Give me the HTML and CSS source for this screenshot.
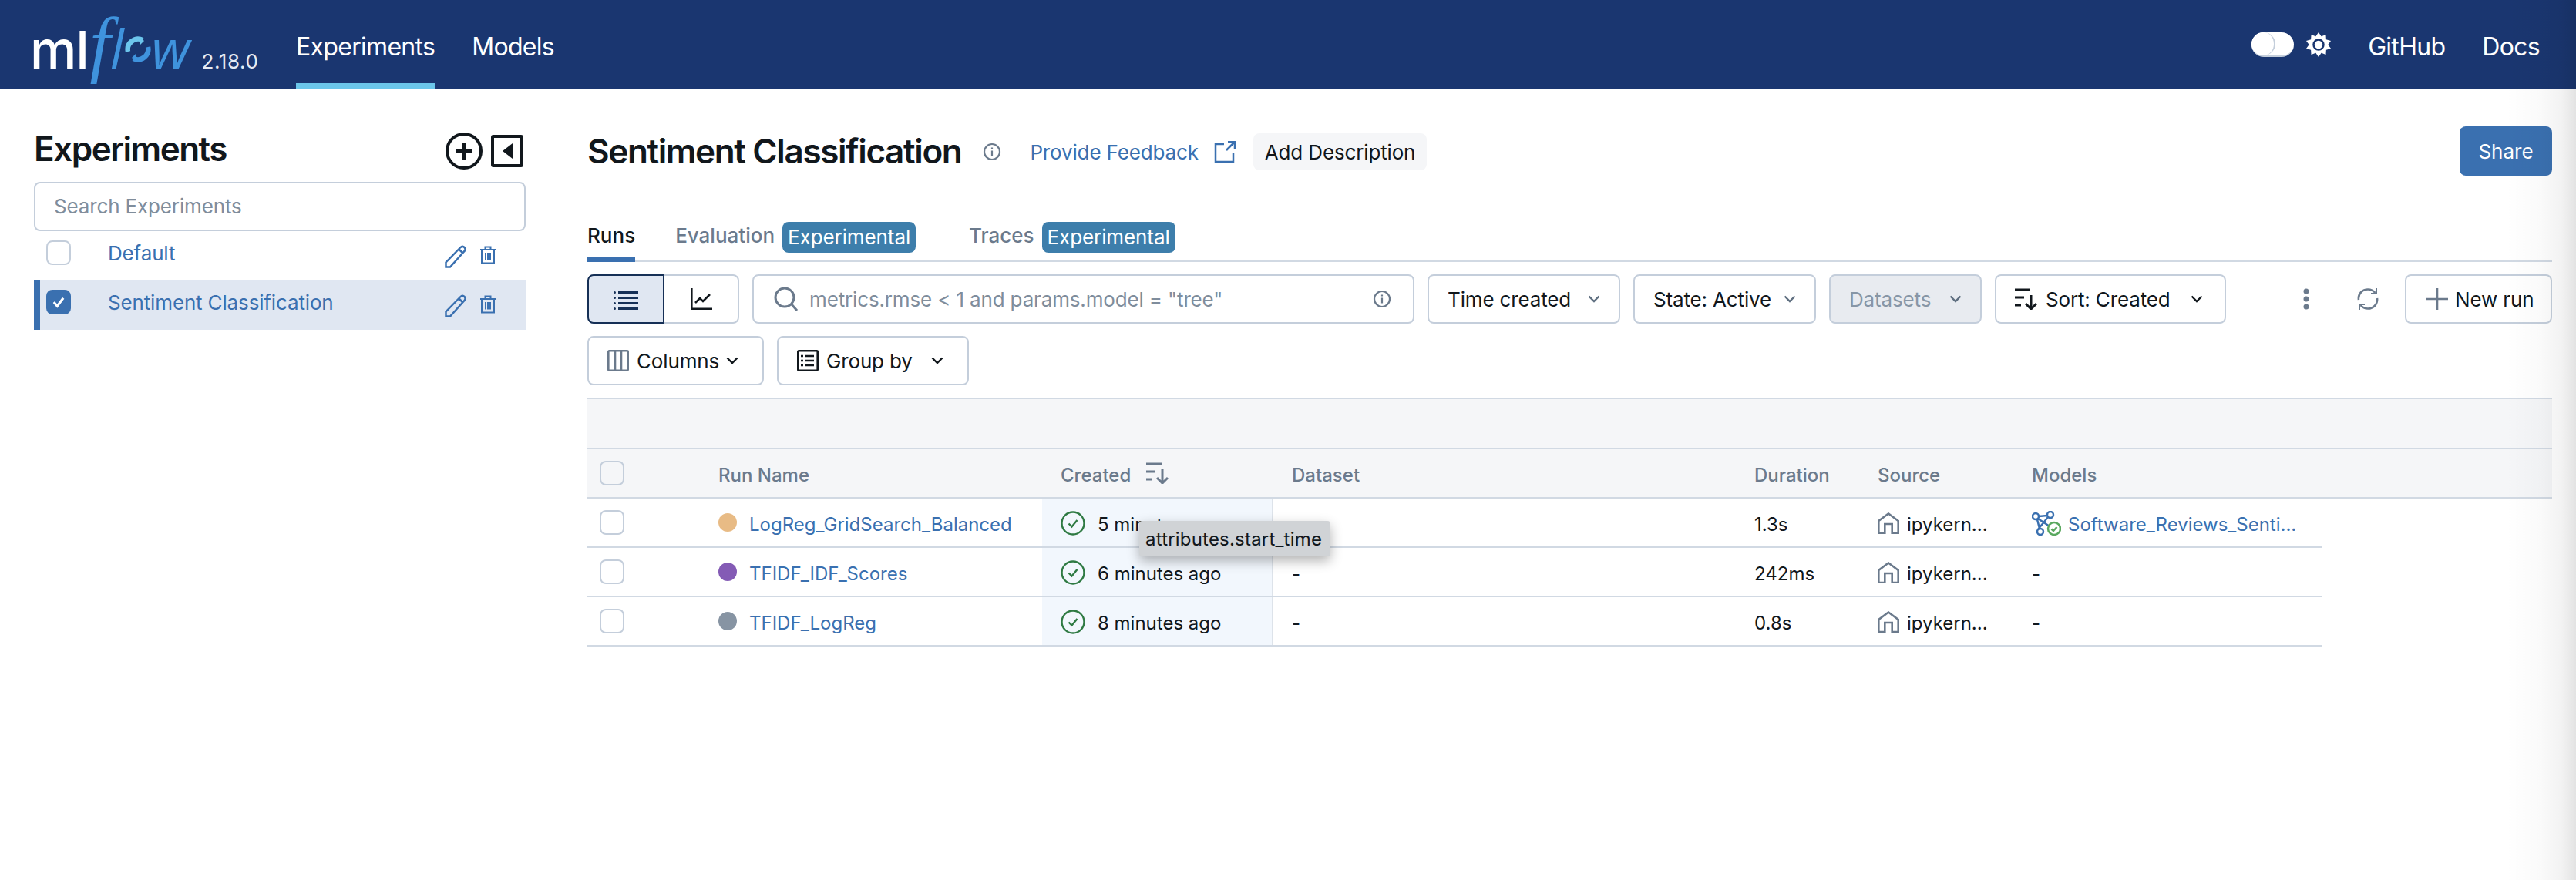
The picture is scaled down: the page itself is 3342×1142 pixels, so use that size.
FILE: index.html
```html
<!DOCTYPE html>
<html lang="en">
<head>
    <meta charset="UTF-8">
    <title>MLflow Experiments</title>
    <link rel="stylesheet" href="styles.css">
</head>
<body>
    <header class="topbar">
        <div class="logo">
            <span class="logo-ml">ml</span>
            <span class="logo-f">f</span>
            <span class="logo-l">l</span>
            <svg class="logo-ring" viewBox="0 0 36 36" fill="none" stroke-width="6.5">
                <path d="M5 21A13.5 13.5 0 0 1 24 6" stroke="#6cc5ec"/>
                <path d="M20 2l6 5-6 6z" fill="#6cc5ec"/>
                <path d="M31 15A13.5 13.5 0 0 1 12 30" stroke="#3f93dd"/>
                <path d="M16 34l-6-5 6-6z" fill="#3f93dd"/>
            </svg>
            <span class="logo-w">w</span>
            <span class="version">2.18.0</span>
        </div>
        <nav class="mainnav">
            <a class="navlink active">Experiments</a>
            <a class="navlink">Models</a>
        </nav>
        <div class="navright">
            <span class="toggle"><span class="knob"></span></span>
            <svg class="sun" viewBox="0 0 32 32">
                <path fill="#fff" d="M16 0l3.6 5.2 5.9-2.2.4 6.300 6.100 1.700-3.700 5 3.700 5-6.100 1.700-.4 6.300-5.900-2.200L16 32l-3.600-5.200-5.900 2.200-.4-6.300L0 21l3.700-5L0 11l6.100-1.700.4-6.300 5.900 2.200z"/>
                <circle cx="16" cy="16" r="6.500" fill="none" stroke="#1a3670" stroke-width="2.500"/>
            </svg>
            <a class="navlink plain github">GitHub</a>
            <a class="navlink plain">Docs</a>
        </div>
    </header>

    <div class="page">
        <aside class="sidebar">
            <div class="side-head">
                <h2>Experiments</h2>
                <svg class="plus" viewBox="0 0 48 48" fill="none" stroke="#11171c">
                    <circle cx="24" cy="24" r="22" stroke-width="4"/>
                    <path d="M13 24h22M24 13v22" stroke-width="4"/>
                </svg>
                <svg class="collapse" viewBox="0 0 42 42">
                    <rect x="2" y="2" width="38" height="38" rx="1" fill="none" stroke="#11171c" stroke-width="4"/>
                    <path d="M28 11v20L15 21z" fill="#11171c"/>
                </svg>
            </div>
            <div class="side-search">Search Experiments</div>
            <div class="exp-row">
                <span class="check"></span>
                <a class="exp-name">Default</a>
                <svg class="edit" viewBox="0 0 28 30" fill="none" stroke="#3a70b0" stroke-width="2.500"><path d="M1.500 28.500v-6L20 3.500c2-2 4-2 5.500-.5s1.500 3.500-.5 5.500L7 28.500zM18.500 5.500l5 5"/></svg>
                <svg class="trash" viewBox="0 0 22 24" fill="none" stroke="#3a70b0" stroke-width="2"><path d="M1 5h20M7.500 5V1.500h7V5M3 5v17.500h16V5M8 9v9.500M11 9v9.500M14 9v9.500"/></svg>
            </div>
            <div class="exp-row selected">
                <span class="check checked">
                    <svg viewBox="0 0 32 32" fill="none" stroke="#fff" stroke-width="3.500"><path d="M9 16l5 6 9-12"/></svg>
                </span>
                <a class="exp-name">Sentiment Classification</a>
                <svg class="edit" viewBox="0 0 28 30" fill="none" stroke="#3a70b0" stroke-width="2.500"><path d="M1.500 28.500v-6L20 3.500c2-2 4-2 5.500-.5s1.500 3.500-.5 5.500L7 28.500zM18.500 5.500l5 5"/></svg>
                <svg class="trash" viewBox="0 0 22 24" fill="none" stroke="#3a70b0" stroke-width="2"><path d="M1 5h20M7.500 5V1.500h7V5M3 5v17.500h16V5M8 9v9.500M11 9v9.500M14 9v9.500"/></svg>
            </div>
        </aside>

        <main class="content">
            <div class="title-row">
                <h1>Sentiment Classification</h1>
                <svg class="info title-info" viewBox="0 0 24 24" fill="none" stroke="#6b7a8c" stroke-width="2.200"><circle cx="12" cy="12" r="10"/><path d="M12 10.500v7M12 6.500v2"/></svg>
                <a class="feedback">Provide Feedback</a>
                <svg class="external" viewBox="0 0 28 28" fill="none" stroke="#3a70b0" stroke-width="2.500"><path d="M13 4H2v23h23V15M16 12L27 1M18 1h9v9"/></svg>
                <span class="add-desc">Add Description</span>
                <button class="share">Share</button>
            </div>

            <div class="tabs">
                <span class="tab current">Runs</span>
                <span class="tab">Evaluation <span class="badge">Experimental</span></span>
                <span class="tab traces">Traces <span class="badge">Experimental</span></span>
            </div>

            <div class="toolbar">
                <div class="view-switch">
                    <span class="view active">
                        <svg viewBox="0 0 32 28" fill="#163056"><path d="M6 4h26v3H6zM6 11h26v3H6zM6 18h26v3H6zM6 25h26v3H6z"/><circle cx="1.500" cy="5.500" r="1.500"/><circle cx="1.500" cy="12.500" r="1.500"/><circle cx="1.500" cy="19.500" r="1.500"/><circle cx="1.500" cy="26.500" r="1.500"/></svg>
                    </span>
                    <span class="view">
                        <svg viewBox="0 0 28 28" fill="none" stroke="#11171c" stroke-width="2.600"><path d="M1.300 0v26.700H28M6 19l6-6 4 4 9-9"/></svg>
                    </span>
                </div>
                <div class="filter">
                    <svg class="search-icon" viewBox="0 0 32 32" fill="none" stroke="#6b7a8c" stroke-width="3"><circle cx="14" cy="14" r="12"/><path d="M23 23l7 8"/></svg>
                    <span class="filter-text">metrics.rmse &lt; 1 and params.model = "tree"</span>
                    <svg class="info" viewBox="0 0 24 24" fill="none" stroke="#6b7a8c" stroke-width="2.200"><circle cx="12" cy="12" r="10"/><path d="M12 10.500v7M12 6.500v2"/></svg>
                </div>
                <div class="btn w-time">Time created <svg class="chev" viewBox="0 0 16 10" fill="none" stroke="#5f6f80" stroke-width="2.400"><path d="M1.500 1.500L8 8l6.500-6.500"/></svg></div>
                <div class="btn w-state">State: Active <svg class="chev" viewBox="0 0 16 10" fill="none" stroke="#5f6f80" stroke-width="2.400"><path d="M1.500 1.500L8 8l6.500-6.500"/></svg></div>
                <div class="btn w-data disabled">Datasets <svg class="chev" viewBox="0 0 16 10" fill="none" stroke="#5f6f80" stroke-width="2.400"><path d="M1.500 1.500L8 8l6.500-6.500"/></svg></div>
                <div class="btn w-sort">
                    <svg class="sort" viewBox="0 0 30 28" fill="none" stroke="#11171c" stroke-width="3"><path d="M0 2h20M0 12h12M0 22h8M21 9v18M14 20l7 7 7-7"/></svg>
                    Sort: Created
                    <svg class="chev dark" viewBox="0 0 16 10" fill="none" stroke="#11171c" stroke-width="2.400"><path d="M1.500 1.500L8 8l6.500-6.500"/></svg>
                </div>
                <div class="tools">
                    <svg class="kebab" viewBox="0 0 8 28" fill="#6b7a8c"><circle cx="4" cy="4" r="3.500"/><circle cx="4" cy="14" r="3.500"/><circle cx="4" cy="24" r="3.500"/></svg>
                    <svg class="refresh" viewBox="0 0 28 28" fill="none" stroke="#6b7a8c" stroke-width="2.600"><path d="M2 15C1 7 7 1.500 14 1.500c4 0 7 1.500 9.500 4.500M26 13c1 8-5 13.500-12 13.500-4 0-7-1.500-9.500-4.500"/><path d="M25 0v7h-7M3 28v-7h7" stroke-width="2"/></svg>
                    <div class="btn w-new">
                        <svg class="newplus" viewBox="0 0 28 28" stroke="#6b7a8c" stroke-width="2.600"><path d="M0 14h28M14 0v28"/></svg>
                        New run
                    </div>
                </div>
            </div>

            <div class="toolbar second">
                <div class="btn w-cols">
                    <svg class="cols" viewBox="0 0 28 28" fill="none" stroke="#6b7a8c" stroke-width="2.600"><rect x="1.300" y="1.300" width="25.400" height="25.400" rx="1"/><path d="M10 1v26M18 1v26"/></svg>
                    Columns
                    <svg class="chev dark" viewBox="0 0 16 10" fill="none" stroke="#11171c" stroke-width="2.400"><path d="M1.500 1.500L8 8l6.500-6.500"/></svg>
                </div>
                <div class="btn w-group">
                    <svg class="cols" viewBox="0 0 28 28" fill="none" stroke="#11171c" stroke-width="2.600"><rect x="1.300" y="1.300" width="25.400" height="25.400" rx="1"/><path d="M11 8h11M11 14h11M11 20h11M5 8h3M5 14h3M5 20h3"/></svg>
                    Group by
                    <svg class="chev dark" viewBox="0 0 16 10" fill="none" stroke="#11171c" stroke-width="2.400"><path d="M1.500 1.500L8 8l6.500-6.500"/></svg>
                </div>
            </div>

            <div class="table">
                <div class="table-top"></div>
                <div class="row head">
                    <div class="c-check"><span class="check grey"></span></div>
                    <div class="c-name">Run Name</div>
                    <div class="c-created">Created
                        <svg class="sort small" viewBox="0 0 30 28" fill="none" stroke="#6b7a8c" stroke-width="3"><path d="M0 2h20M0 12h12M0 22h8M21 9v18M14 20l7 7 7-7"/></svg>
                    </div>
                    <div class="c-data">Dataset</div>
                    <div class="c-dur">Duration</div>
                    <div class="c-src">Source</div>
                    <div class="c-model">Models</div>
                </div>

                <div class="row">
                    <div class="c-check"><span class="check"></span></div>
                    <div class="c-name"><span class="dot orange"></span><a class="run-link">LogReg_GridSearch_Balanced</a></div>
                    <div class="c-created hl">
                        <svg class="ok" viewBox="0 0 32 32" fill="none" stroke="#2f7a43" stroke-width="2.400"><circle cx="16" cy="16" r="14.500"/><path d="M10.500 16.500l4 4 7-8.500"/></svg>
                        5 minutes ago
                    </div>
                    <div class="c-data"></div>
                    <div class="c-dur">1.3s</div>
                    <div class="c-src">
                        <svg class="home" viewBox="0 0 28 28" fill="none" stroke="#6b7a8c" stroke-width="2.600"><path d="M1.300 27V11L14 1.500 26.700 11v16h-8V15H9.300v12z"/></svg>
                        ipykern...
                    </div>
                    <div class="c-model">
                        <svg class="model" viewBox="0 0 38 32">
                            <g fill="none" stroke="#3a70b0" stroke-width="2.500">
                                <circle cx="5" cy="7" r="4"/><circle cx="24" cy="5" r="4"/><circle cx="11" cy="27" r="4"/>
                                <path d="M9 7l11-1M7 11l3 12M21 8L8 24M8 10l15 10"/>
                            </g>
                            <circle cx="29" cy="23" r="8" fill="#fff" stroke="#5aa85f" stroke-width="2.500"/>
                            <path d="M25.500 23.500l2.500 2.500 4.500-5" fill="none" stroke="#5aa85f" stroke-width="2.500"/>
                        </svg>
                        <a class="run-link">Software_Reviews_Senti...</a>
                    </div>
                </div>

                <div class="row">
                    <div class="c-check"><span class="check"></span></div>
                    <div class="c-name"><span class="dot purple"></span><a class="run-link">TFIDF_IDF_Scores</a></div>
                    <div class="c-created hl">
                        <svg class="ok" viewBox="0 0 32 32" fill="none" stroke="#2f7a43" stroke-width="2.400"><circle cx="16" cy="16" r="14.500"/><path d="M10.500 16.500l4 4 7-8.500"/></svg>
                        6 minutes ago
                    </div>
                    <div class="c-data">-</div>
                    <div class="c-dur">242ms</div>
                    <div class="c-src">
                        <svg class="home" viewBox="0 0 28 28" fill="none" stroke="#6b7a8c" stroke-width="2.600"><path d="M1.300 27V11L14 1.500 26.700 11v16h-8V15H9.300v12z"/></svg>
                        ipykern...
                    </div>
                    <div class="c-model">-</div>
                </div>

                <div class="row">
                    <div class="c-check"><span class="check"></span></div>
                    <div class="c-name"><span class="dot grey"></span><a class="run-link">TFIDF_LogReg</a></div>
                    <div class="c-created hl">
                        <svg class="ok" viewBox="0 0 32 32" fill="none" stroke="#2f7a43" stroke-width="2.400"><circle cx="16" cy="16" r="14.500"/><path d="M10.500 16.500l4 4 7-8.500"/></svg>
                        8 minutes ago
                    </div>
                    <div class="c-data">-</div>
                    <div class="c-dur">0.8s</div>
                    <div class="c-src">
                        <svg class="home" viewBox="0 0 28 28" fill="none" stroke="#6b7a8c" stroke-width="2.600"><path d="M1.300 27V11L14 1.500 26.700 11v16h-8V15H9.300v12z"/></svg>
                        ipykern...
                    </div>
                    <div class="c-model">-</div>
                </div>

                <div class="tooltip">attributes.start_time</div>
            </div>
        </main>
    </div>
    <div class="edge-shade"></div>
</body>
</html>
```

FILE: styles.css
```css
* {
    margin: 0;
    padding: 0;
    box-sizing: border-box;
}

body {
    font-family: Inter, "Noto Sans", sans-serif;
    font-size: 26px;
    letter-spacing: -0.15px;
    color: #11171c;
    background: #fff;
    height: 1142px;
    overflow: hidden;
}

a {
    color: inherit;
}

svg {
    flex: none;
    display: block;
}

/* Top bar */
.topbar {
    height: 116px;
    background: #1a3670;
    color: #fff;
    display: flex;
    padding-left: 39px;
    padding-right: 47px;
}

.logo {
    width: 345px;
    display: flex;
    align-items: baseline;
    padding-top: 18px;
    height: 96px;
}

.logo-ml {
    font-size: 68px;
    font-weight: 500;
    line-height: 78px;
    letter-spacing: -1px;
}

.logo-f {
    font-family: "Liberation Serif", serif;
    font-style: italic;
    font-size: 96px;
    line-height: 78px;
    color: #3f93dd;
    margin-left: 2px;
}

.logo-l,
.logo-w {
    font-family: "Open Sans", sans-serif;
    font-style: italic;
    font-size: 70px;
    line-height: 78px;
    color: #3f93dd;
}

.logo-ring {
    width: 36px;
    height: 36px;
    align-self: center;
    margin-top: 14px;
}

.version {
    font-size: 26px;
    letter-spacing: 0.6px;
    margin-left: 15px;
    color: #e6ecf5;
}

.mainnav {
    display: flex;
    gap: 48px;
}

.navlink {
    display: block;
    height: 116px;
    line-height: 122px;
    font-size: 32px;
    letter-spacing: -0.7px;
}

.navlink.active {
    border-bottom: 8px solid #6bc6ea;
}

.navright {
    margin-left: auto;
    display: flex;
    align-items: center;
}

.navlink.plain {
    margin-left: 48px;
}

.toggle {
    width: 55px;
    height: 32px;
    border-radius: 16px;
    background: #fff;
    margin-right: 16px;
    border-bottom: 2px solid #c4cedb;
}

.knob {
    display: block;
    width: 31px;
    height: 30px;
    border-radius: 15px;
    background: #fff;
    border-right: 2px solid #c4cedb;
}

.sun {
    width: 32px;
    height: 32px;
}

/* Page */
.page {
    display: flex;
    padding: 48px 31px 0 44px;
}

.sidebar {
    width: 638px;
    flex: none;
}

.side-head {
    height: 64px;
    display: flex;
    align-items: center;
    margin-bottom: 8px;
}

.side-head h2 {
    font-size: 44px;
    font-weight: 600;
    letter-spacing: -1.5px;
    margin-bottom: 6px;
    flex: 1;
}

.plus {
    width: 48px;
    height: 48px;
    margin-right: 11px;
}

.collapse {
    width: 42px;
    height: 42px;
    margin-right: 3px;
}

.side-search {
    height: 64px;
    border: 2px solid #c4cedb;
    border-radius: 8px;
    padding-left: 24px;
    line-height: 60px;
    color: #7f8d9c;
}

.exp-row {
    height: 64px;
    display: flex;
    align-items: flex-start;
    padding-left: 16px;
    color: #3a70b0;
}

.exp-row.selected {
    background: #e0e7f2;
    border-left: 8px solid #3a70b0;
    padding-left: 8px;
}

.check {
    display: block;
    width: 32px;
    height: 32px;
    border: 2px solid #c4cedb;
    border-radius: 8px;
    background: #fff;
    flex: none;
    margin-top: 12px;
}

.check.checked {
    background: #3a70b0;
    border-color: #3a70b0;
}

.check.checked svg {
    width: 28px;
    height: 28px;
}

.exp-name {
    margin-left: 48px;
    line-height: 58px;
    flex: 1;
}

.edit {
    width: 28px;
    height: 30px;
    margin-top: 18px;
    margin-right: 17px;
}

.trash {
    width: 22px;
    height: 24px;
    margin-top: 19px;
    margin-right: 38px;
}

/* Main column */
.content {
    flex: 1;
    padding-left: 80px;
    min-width: 0;
}

.title-row {
    height: 64px;
    display: flex;
    align-items: center;
}

.title-row h1 {
    font-size: 44px;
    font-weight: 600;
    letter-spacing: -1.35px;
}

.info {
    width: 24px;
    height: 24px;
}

.title-info {
    margin-left: 28px;
    margin-top: 2px;
}

.feedback {
    color: #3a70b0;
    margin-left: 37px;
    margin-top: 3px;
}

.external {
    width: 28px;
    height: 28px;
    margin-left: 20px;
    margin-top: 2px;
}

.add-desc {
    margin-left: 23px;
    height: 48px;
    line-height: 50px;
    padding: 0 15px;
    background: #f5f6f8;
    border-radius: 8px;
    margin-top: 2px;
}

.share {
    margin-left: auto;
    width: 120px;
    height: 64px;
    border: 0;
    border-radius: 8px;
    background: #3a70b0;
    color: #fff;
    font: inherit;
}

/* Tabs */
.tabs {
    margin-top: 52px;
    height: 60px;
    display: flex;
    align-items: flex-start;
    gap: 52px;
    border-bottom: 2px solid #d1d9e3;
    color: #6b7a8c;
    font-weight: 500;
    letter-spacing: 0;
}

.tab {
    height: 60px;
    line-height: 52px;
    display: flex;
    gap: 10px;
}

.tab.traces {
    margin-left: 17px;
}

.tab.current {
    color: #11171c;
    border-bottom: 6px solid #3a70b0;
}

.badge {
    display: block;
    height: 40px;
    margin-top: 8px;
    line-height: 40px;
    padding: 0 7px;
    border-radius: 8px;
    background: #3d7eab;
    color: #fff;
    font-weight: 400;
    letter-spacing: -0.1px;
}

/* Toolbar */
.toolbar {
    display: flex;
    gap: 17px;
    margin-top: 16px;
}

.toolbar.second {
    margin-top: 16px;
}

.view-switch {
    width: 197px;
    height: 64px;
    display: flex;
    border: 2px solid #c4cedb;
    border-radius: 8px;
}

.view {
    flex: 1;
    display: flex;
    align-items: center;
    justify-content: center;
}

.view svg {
    width: 32px;
    height: 28px;
}

.view.active {
    flex: none;
    width: 100px;
    margin: -2px 0 -2px -2px;
    background: #e0e7f2;
    border: 2px solid #163056;
    border-radius: 8px 0 0 8px;
}

.filter {
    width: 859px;
    height: 64px;
    border: 2px solid #c4cedb;
    border-radius: 8px;
    display: flex;
    align-items: center;
    padding: 0 28px 0 26px;
}

.search-icon {
    width: 32px;
    height: 32px;
}

.filter-text {
    flex: 1;
    margin-left: 14px;
    color: #7f8d9c;
}

.btn {
    height: 64px;
    border: 2px solid #c4cedb;
    border-radius: 8px;
    display: flex;
    align-items: center;
    padding-left: 24px;
    white-space: nowrap;
}

.chev {
    width: 16px;
    height: 10px;
    margin-left: auto;
    margin-right: 24px;
}

.w-time { width: 250px; }
.w-state { width: 237px; }
.w-data { width: 198px; }
.w-sort { width: 300px; }
.w-new { width: 191px; padding-left: 26px; background: #fff; }
.w-cols { width: 229px; }
.w-group { width: 249px; }

.w-sort .chev { margin-right: 28px; }
.w-cols .chev { margin-right: 31px; }
.w-group .chev { margin-right: 31px; }

.disabled {
    background: #e8ebf0;
    color: #8796a6;
}

.sort {
    width: 30px;
    height: 28px;
    margin-right: 10px;
}

.tools {
    margin-left: auto;
    display: flex;
    align-items: center;
}

.kebab {
    width: 8px;
    height: 28px;
    margin-right: 62px;
}

.refresh {
    width: 28px;
    height: 28px;
    margin-right: 34px;
}

.newplus {
    width: 28px;
    height: 28px;
    margin-right: 9px;
}

.cols {
    width: 28px;
    height: 28px;
    margin-right: 10px;
}

/* Table */
.table {
    margin-top: 16px;
    position: relative;
}

.table-top {
    height: 67px;
    background: #f5f6f8;
    border-top: 2px solid #d1d9e3;
    border-bottom: 2px solid #d1d9e3;
}

.row {
    display: grid;
    grid-template-columns: 146px 444px 300px 600px 160px 200px 400px;
    width: 2250px;
    height: 64px;
    border-bottom: 2px solid #d1d9e3;
    font-size: 24px;
    letter-spacing: 0;
}

.row.head {
    width: auto;
    background: #f5f6f8;
    color: #6b7a8c;
    font-weight: 500;
}

.row > div {
    display: flex;
    align-items: center;
    padding-left: 24px;
    padding-top: 4px;
    white-space: nowrap;
}

.row > .c-check {
    padding-left: 16px;
}

/* cells sit text 2px low, icons stay centred */
.row svg,
.row .check,
.row .dot {
    margin-top: -4px;
}

.row .ok,
.row .home,
.row .model {
    margin-top: -2px;
}

.check.grey {
    background: transparent;
}

.hl {
    background: #f2f7fd;
    border-right: 2px solid #dde3ea;
}

.c-created .small {
    width: 30px;
    height: 28px;
    margin-left: 20px;
}

.dot {
    width: 24px;
    height: 24px;
    border-radius: 50%;
    margin-right: 16px;
}

.dot.orange { background: #e8bb85; }
.dot.purple { background: #845bb5; }
.dot.grey { background: #8794a3; }

.run-link {
    color: #3a70b0;
}

.ok {
    width: 32px;
    height: 32px;
    margin-right: 16px;
}

.home {
    width: 28px;
    height: 28px;
    margin-right: 10px;
}

.model {
    width: 38px;
    height: 32px;
    margin-right: 9px;
}

.tooltip {
    position: absolute;
    left: 716px;
    top: 160px;
    width: 248px;
    height: 46px;
    line-height: 48px;
    padding-left: 8px;
    font-size: 24px;
    letter-spacing: 0.2px;
    background: #d0d3d6;
    border-radius: 4px;
    box-shadow: 0 6px 16px rgba(0, 0, 0, 0.3);
}

.edge-shade {
    position: absolute;
    top: 0;
    right: 0;
    width: 92px;
    height: 100%;
    background: linear-gradient(90deg, rgba(0, 0, 0, 0), rgba(0, 0, 0, 0.02) 50%, rgba(0, 0, 0, 0.05) 80%, rgba(0, 0, 0, 0.11));
    pointer-events: none;
}
```
